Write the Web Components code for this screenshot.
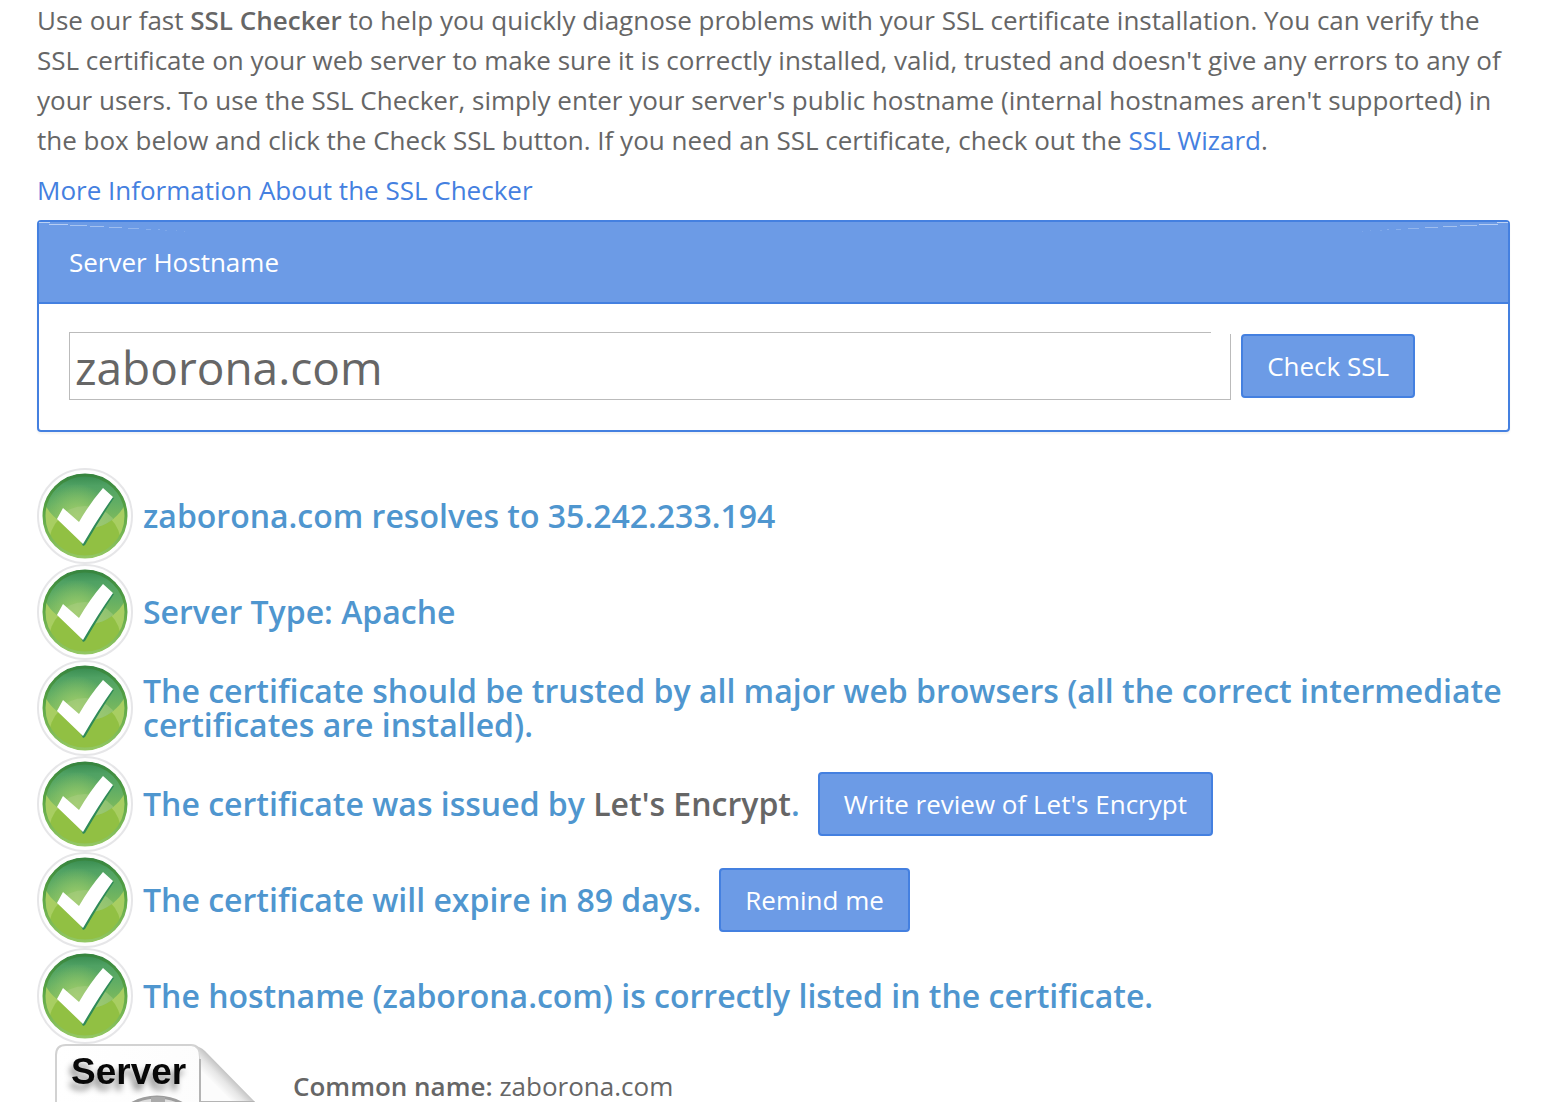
<!DOCTYPE html>
<html lang="en">
<head>
<meta charset="utf-8">
<meta name="viewport" content="width=device-width, initial-scale=1">
<title>SSL Checker</title>
<style>
  body {
    margin: 0;
    background: #fff;
    color: #666;
    font: 26px/40px "Open Sans", "Noto Sans", sans-serif;
    --blue: #4480e0;
    --blue-light: #6c9be6;
    --heading: #4f96cf;
  }
</style>
</head>
<body>
<ssl-page>
  <ssl-intro slot="intro"></ssl-intro>
  <hostname-panel></hostname-panel>
  <check-list>
    <check-row>zaborona.com resolves to 35.242.233.194</check-row>
    <check-row>Server Type: Apache</check-row>
    <check-row>The certificate should be trusted by all major web browsers (all the correct intermediate certificates are installed).</check-row>
    <check-row>The certificate was issued by <issuer-name>Let's Encrypt</issuer-name>.<blue-button slot="action">Write review of Let's Encrypt</blue-button></check-row>
    <check-row>The certificate will expire in 89 days.<blue-button slot="action">Remind me</blue-button></check-row>
    <check-row>The hostname (zaborona.com) is correctly listed in the certificate.</check-row>
  </check-list>
  <cert-card label="Common name:">zaborona.com</cert-card>
</ssl-page>

<script>
class SslPage extends HTMLElement {
  connectedCallback() {
    this.attachShadow({ mode: 'open' });
    this.shadowRoot.innerHTML = `
      <style>
        :host {
          display: block;
          box-sizing: border-box;
          height: 100vh;
          overflow: hidden;
          padding: 0 48px 0 37px;
        }
      </style>
      <slot name="intro"></slot>
      <slot></slot>
    `;
  }
}
customElements.define('ssl-page', SslPage);

class SslIntro extends HTMLElement {
  connectedCallback() {
    this.attachShadow({ mode: 'open' });
    this.shadowRoot.innerHTML = `
      <style>
        :host { display: block; }
        p { margin: 0 0 10px; }
        b { font-weight: 600; }
        a { color: var(--blue); text-decoration: none; }
      </style>
      <p>Use our fast <b>SSL Checker</b> to help you quickly diagnose problems with your SSL certificate installation. You can verify the SSL certificate on your web server to make sure it is correctly installed, valid, trusted and doesn't give any errors to any of your users. To use the SSL Checker, simply enter your server's public hostname (internal hostnames aren't supported) in the box below and click the Check SSL button. If you need an SSL certificate, check out the <a href="#">SSL Wizard</a>.</p>
      <p><a href="#">More Information About the SSL Checker</a></p>
    `;
  }
}
customElements.define('ssl-intro', SslIntro);

class BlueButton extends HTMLElement {
  connectedCallback() {
    this.attachShadow({ mode: 'open' });
    this.shadowRoot.innerHTML = `
      <style>
        :host { display: inline-block; }
        button {
          display: block;
          height: 64px;
          padding: 0 24px;
          border: 2px solid var(--blue);
          border-radius: 4px;
          background: var(--blue-light);
          color: #fff;
          font: 400 26px/40px "Open Sans", "Noto Sans", sans-serif;
          white-space: nowrap;
          cursor: pointer;
        }
      </style>
      <button type="button"><slot></slot></button>
    `;
  }
}
customElements.define('blue-button', BlueButton);

class HostnamePanel extends HTMLElement {
  connectedCallback() {
    this.attachShadow({ mode: 'open' });
    const streaks = `
      <g fill="#fff">
        <path d="M0 0h11v1H0z" opacity=".55"/>
        <path d="M10 2h19v1H10z" opacity=".5"/>
        <path d="M31 3h17v1H31z" opacity=".4"/>
        <path d="M51 4h14v1H51z" opacity=".38"/>
        <path d="M70 5h13v1H70z" opacity=".34"/>
        <path d="M89 6h11v1H89z" opacity=".26"/>
        <path d="M107 7h5v1h-5zM119 7h2v1h-2z" opacity=".2"/>
        <path d="M126 8h2v1h-2zM137 8h1v1h-1zM145 9h1v1h-1z" opacity=".12"/>
      </g>`;
    this.shadowRoot.innerHTML = `
      <style>
        :host {
          display: block;
          border: 2px solid var(--blue);
          border-radius: 4px;
          box-shadow: 0 2px 2px rgba(0, 0, 0, 0.05);
        }
        header {
          position: relative;
          padding: 20px 30px;
          border-bottom: 2px solid var(--blue);
          background: var(--blue-light);
          color: #fff;
        }
        header svg {
          position: absolute;
          top: 0;
          left: 0;
        }
        header svg + svg {
          left: auto;
          right: 0;
          transform: scaleX(-1);
        }
        form {
          display: flex;
          align-items: center;
          gap: 10px;
          margin: 0;
          padding: 28px 93px 30px 30px;
        }
        input {
          flex: 1;
          min-width: 0;
          box-sizing: border-box;
          height: 68px;
          padding: 2px 6px 0;
          border: 0;
          outline: 0;
          color: #666;
          font: 46px/60px "Open Sans", "Noto Sans", sans-serif;
          /* thin inset frame, open at the top right corner */
          background:
            linear-gradient(#bbb, #bbb) 0 0 / calc(100% - 20px) 1px no-repeat,
            linear-gradient(#bbb, #bbb) 0 0 / 1px 100% no-repeat,
            linear-gradient(#bbb, #bbb) 0 100% / 100% 1px no-repeat,
            linear-gradient(#bbb, #bbb) 100% 2px / 1px 100% no-repeat,
            #fff;
        }
      </style>
      <header>
        <svg width="160" height="12" aria-hidden="true">${streaks}</svg>
        <svg width="160" height="12" aria-hidden="true">${streaks}</svg>
        <label for="hostname">Server Hostname</label>
      </header>
      <form>
        <input id="hostname" type="text" value="zaborona.com" spellcheck="false">
        <blue-button>Check SSL</blue-button>
      </form>
    `;
  }
}
customElements.define('hostname-panel', HostnamePanel);

class CheckList extends HTMLElement {
  connectedCallback() {
    this.attachShadow({ mode: 'open' });
    this.shadowRoot.innerHTML = `
      <style>
        :host { display: block; margin-top: 36px; }
      </style>
      <slot></slot>
    `;
  }
}
customElements.define('check-list', CheckList);

class IssuerName extends HTMLElement {
  connectedCallback() {
    this.attachShadow({ mode: 'open' });
    // kept on one line, whitespace here would show up before the full stop
    this.shadowRoot.innerHTML = `<style>:host { display: inline; color: #666; }</style><slot></slot>`;
  }
}
customElements.define('issuer-name', IssuerName);

class CheckIcon extends HTMLElement {
  connectedCallback() {
    this.attachShadow({ mode: 'open' });
    this.shadowRoot.innerHTML = `
      <style>
        :host { display: block; width: 96px; height: 96px; }
        svg { display: block; }
      </style>
      <svg width="96" height="96" viewBox="0 0 96 96" aria-hidden="true">
        <defs>
          <linearGradient id="top" gradientUnits="userSpaceOnUse" x1="0" y1="6" x2="0" y2="64">
            <stop offset="0" stop-color="#35894d"/>
            <stop offset=".2" stop-color="#4fa163"/>
            <stop offset=".5" stop-color="#62ae64"/>
            <stop offset="1" stop-color="#8fc257"/>
          </linearGradient>
          <radialGradient id="glow" gradientUnits="userSpaceOnUse" cx="40" cy="48" r="32">
            <stop offset="0" stop-color="#a4cf6c"/>
            <stop offset=".5" stop-color="#96c968" stop-opacity=".6"/>
            <stop offset="1" stop-color="#96c968" stop-opacity="0"/>
          </radialGradient>
          <linearGradient id="rim" x1="0" y1="0" x2="0" y2="1">
            <stop offset="0" stop-color="#37853f"/>
            <stop offset=".45" stop-color="#5ba645"/>
            <stop offset="1" stop-color="#93c763"/>
          </linearGradient>
          <clipPath id="disc"><circle cx="48" cy="48" r="42"/></clipPath>
          <clipPath id="bowl"><circle cx="48" cy="16" r="45"/></clipPath>
        </defs>
        <circle cx="48" cy="48" r="47" fill="#fefefe" stroke="#e6e6e8" stroke-width="2"/>
        <g clip-path="url(#disc)">
          <path d="M0 0h96v96H0z" fill="#a8ce62"/>
          <circle cx="48" cy="76" r="36" fill="#91c043"/>
          <circle cx="48" cy="16" r="45" fill="url(#top)"/>
          <circle cx="48" cy="16" r="45" fill="url(#glow)"/>
          <g clip-path="url(#bowl)"><circle cx="48" cy="76" r="38" fill="#a9cd84" opacity=".5"/></g>
        </g>
        <circle cx="48" cy="48" r="41" fill="none" stroke="url(#rim)" stroke-width="3"/>
        <path d="M77 30Q63 51 48 77l-2 1-2-4 30-45z" fill="#2f8a58"/>
        <path d="m20 51 6-11 16 14Q53 35 66 20l10 9Q61 50 46 76z" fill="#fff"/>
      </svg>
    `;
  }
}
customElements.define('check-icon', CheckIcon);

class CheckRow extends HTMLElement {
  connectedCallback() {
    this.attachShadow({ mode: 'open' });
    this.shadowRoot.innerHTML = `
      <style>
        :host {
          display: flex;
          align-items: center;
          min-height: 96px;
        }
        check-icon { flex: none; margin-right: 10px; }
        h3 {
          margin: 0;
          color: var(--heading);
          font-size: 32px;
          font-weight: 600;
          line-height: 34px;
        }
        ::slotted(blue-button) { flex: none; margin-left: 18px; }
      </style>
      <check-icon></check-icon>
      <h3><slot></slot></h3>
      <slot name="action"></slot>
    `;
  }
}
customElements.define('check-row', CheckRow);

class ServerIcon extends HTMLElement {
  connectedCallback() {
    this.attachShadow({ mode: 'open' });
    this.shadowRoot.innerHTML = `
      <style>
        :host { display: block; width: 256px; }
        svg { display: block; }
        text {
          font: 700 37px "Liberation Sans", sans-serif;
          filter: drop-shadow(-3px 6px 3px rgba(0, 0, 0, 0.45));
        }
      </style>
      <svg width="256" height="256" viewBox="0 0 256 256" role="img" aria-label="Server">
        <defs>
          <linearGradient id="sheet" x1="0" x2="1">
            <stop offset="0" stop-color="#fff"/>
            <stop offset=".9" stop-color="#fcfcfc"/>
            <stop offset="1" stop-color="#e6e6e6"/>
          </linearGradient>
          <linearGradient id="fold" gradientUnits="userSpaceOnUse" x1="192" y1="29" x2="179" y2="42">
            <stop offset="0" stop-color="#bdbdbd"/>
            <stop offset=".5" stop-color="#e6e6e6"/>
            <stop offset="1" stop-color="#fcfcfc"/>
          </linearGradient>
        </defs>
        <path d="M19 256V11q0-10 10-10h125q9 0 9 12v45h54v198z" fill="url(#sheet)" stroke="#d2d2d2" stroke-width="2"/>
        <path d="M154 1q9 2 9 14v43h55L168 7q-5-5-14-6z" fill="url(#fold)"/>
        <path d="M163 15v43h54" fill="none" stroke="#b4b4b4" stroke-width="2"/>
        <circle cx="120" cy="104" r="51" fill="#dedede" stroke="#9d9d9d" stroke-width="3"/>
        <path d="M114 53h14v12h-14z" fill="#aaa"/>
        <text x="34" y="40" fill="#080808">Server</text>
      </svg>
    `;
  }
}
customElements.define('server-icon', ServerIcon);

class CertCard extends HTMLElement {
  connectedCallback() {
    this.attachShadow({ mode: 'open' });
    this.shadowRoot.innerHTML = `
      <style>
        :host { display: flex; align-items: flex-start; }
        server-icon { flex: none; }
        p { margin: 0; padding-top: 22px; }
        b { font-weight: 600; }
      </style>
      <server-icon></server-icon>
      <p><b>${this.getAttribute('label')}</b> <slot></slot></p>
    `;
  }
}
customElements.define('cert-card', CertCard);
</script>
</body>
</html>
